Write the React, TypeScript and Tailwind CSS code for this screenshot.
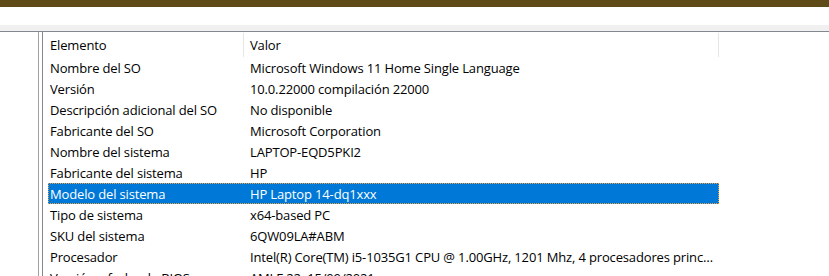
import React from "react";

type Row = { label: string; value: string; selected?: boolean };

const rows: Row[] = [
  { label: "Nombre del SO", value: "Microsoft Windows 11 Home Single Language" },
  { label: "Versión", value: "10.0.22000 compilación 22000" },
  { label: "Descripción adicional del SO", value: "No disponible" },
  { label: "Fabricante del SO", value: "Microsoft Corporation" },
  { label: "Nombre del sistema", value: "LAPTOP-EQD5PKI2" },
  { label: "Fabricante del sistema", value: "HP" },
  { label: "Modelo del sistema", value: "HP Laptop 14-dq1xxx", selected: true },
  { label: "Tipo de sistema", value: "x64-based PC" },
  { label: "SKU del sistema", value: "6QW09LA#ABM" },
  {
    label: "Procesador",
    value:
      "Intel(R) Core(TM) i5-1035G1 CPU @ 1.00GHz, 1201 Mhz, 4 procesadores principales, 8 procesadores lógicos",
  },
  { label: "Versión y fecha de BIOS", value: "AMI F.22, 15/09/2021" },
];

function ListRow({ label, value, selected }: Row) {
  const rowClass = selected
    ? "bg-[#0078d7] text-white outline-1 outline-dotted -outline-offset-1 outline-[#f0a040]"
    : "text-black";
  return (
    <div className={`ml-[5px] w-[671px] h-[21px] flex ${rowClass}`}>
      <span className="w-[202px] shrink-0 pl-[2px] pt-[2px] leading-[19px] truncate">{label}</span>
      <span className="flex-1 pr-[4px] pt-[2px] leading-[19px] truncate">{value}</span>
    </div>
  );
}

export default function App() {
  return (
    <div className="h-[276px] w-[829px] overflow-hidden bg-white font-['Open_Sans',sans-serif] text-[13px] tracking-[-0.15px] text-black">
      <div className="h-[7px] bg-[#5e4b18]" />
      <div className="h-[18px] bg-white" />
      <div className="h-[6px] bg-[#f0f0f0]" />
      <div className="flex h-[300px] border-t border-[#828790]">
        <div className="w-[38px] shrink-0" />
        <div className="w-px shrink-0 bg-[#a0a0a0]" />
        <div className="w-[3px] shrink-0" />
        <div className="flex-1 border-l border-[#828790]">
          <div className="flex h-[25px] items-start">
            <div className="w-[200px] shrink-0 pl-[7px] pt-[2px] leading-[23px]">Elemento</div>
            <div className="mt-px h-[24px] w-px bg-[#e5e5e5]" />
            <div className="w-[474px] shrink-0 pl-[6px] pt-[2px] leading-[23px]">Valor</div>
            <div className="mt-px h-[24px] w-px bg-[#e5e5e5]" />
          </div>
          {rows.map((r) => (
            <ListRow key={r.label} {...r} />
          ))}
        </div>
      </div>
    </div>
  );
}
